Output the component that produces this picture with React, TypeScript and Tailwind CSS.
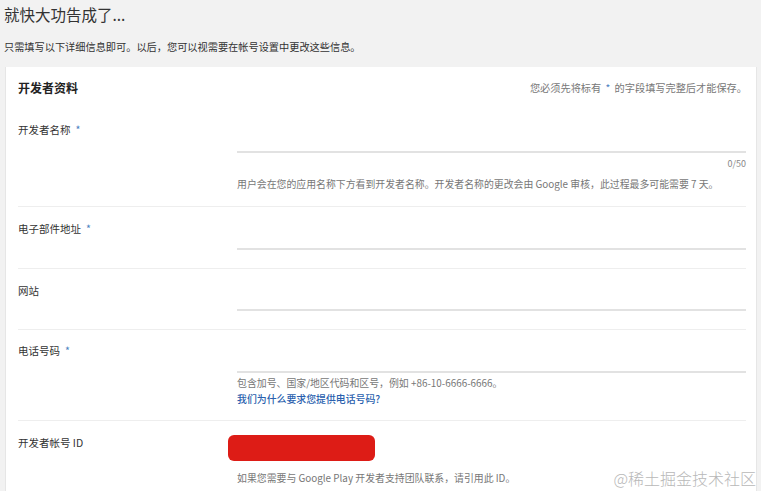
import React from "react";

const font = { fontFamily: '"Noto Sans CJK SC", "Noto Sans", sans-serif' };

function Star() {
  return <span className="ml-[5px] text-[#4a7fc1]">*</span>;
}

export default function App() {
  return (
    <div
      className="relative h-[491px] w-[761px] overflow-hidden bg-[#f2f2f2] text-[#333]"
      style={font}
    >
      <div className="pl-[4px] pt-[4px] text-[15.5px] leading-[20px] text-[#333]">就快大功告成了...</div>
      <div className="mt-[16px] pl-[4px] text-[10.2px] leading-[14px] text-[#333]">
        只需填写以下详细信息即可。以后，您可以视需要在帐号设置中更改这些信息。
      </div>

      <div className="ml-[5px] mt-[13px] w-[752px] border-l border-r border-[#e6e6e6] bg-white">
        <div className="flex h-[41px] items-center justify-between pl-[12px] pr-[9px]">
          <div className="text-[12px] font-bold leading-[14px] text-[#222]">开发者资料</div>
          <div className="text-[10.2px] leading-[12px] text-[#777]">
            您必须先将标有 <span className="px-[2px] text-[#4a7fc1]">*</span> 的字段填写完整后才能保存。
          </div>
        </div>

        <div className="ml-[12px] mr-[10px]">
          {/* Row 1 */}
          <div className="flex border-b border-[#eeeeee] pb-[15px]">
            <div className="w-[219px] shrink-0 pt-[15px] text-[10.5px] leading-[14px]">
              开发者名称<Star />
            </div>
            <div className="flex-1">
              <div className="h-[45px] border-b-[2px] border-[#e2e2e2]" />
              <div className="mt-[5px] text-right text-[9px] leading-[12px] text-[#888]">0/50</div>
              <div className="mt-[7px] text-[9.9px] leading-[14px] text-[#777]">
                用户会在您的应用名称下方看到开发者名称。开发者名称的更改会由 Google 审核，此过程最多可能需要 7 天。
              </div>
            </div>
          </div>

          {/* Row 2 */}
          <div className="flex border-b border-[#eeeeee] pb-[18px]">
            <div className="w-[219px] shrink-0 pt-[15px] text-[10.5px] leading-[14px]">
              电子部件地址<Star />
            </div>
            <div className="flex-1">
              <div className="h-[43px] border-b-[2px] border-[#e2e2e2]" />
            </div>
          </div>

          {/* Row 3 */}
          <div className="flex border-b border-[#eeeeee] pb-[18px]">
            <div className="w-[219px] shrink-0 pt-[15px] text-[10.5px] leading-[14px]">网站</div>
            <div className="flex-1">
              <div className="h-[42px] border-b-[2px] border-[#e2e2e2]" />
            </div>
          </div>

          {/* Row 4 */}
          <div className="flex border-b border-[#eeeeee] pb-[14px]">
            <div className="w-[219px] shrink-0 pt-[14px] text-[10.5px] leading-[14px]">
              电话号码<Star />
            </div>
            <div className="flex-1">
              <div className="h-[43px] border-b-[2px] border-[#e2e2e2]" />
              <div className="mt-[3px] text-[9.9px] leading-[14px] text-[#777]">
                包含加号、国家/地区代码和区号，例如 +86-10-6666-6666。
              </div>
              <div className="mt-[2px] text-[9.9px] font-medium leading-[14px] text-[#2a5fae]">
                我们为什么要求您提供电话号码?
              </div>
            </div>
          </div>

          {/* Row 5 */}
          <div className="flex pb-[20px]">
            <div className="w-[219px] shrink-0 pt-[15px] text-[10.5px] leading-[14px]">开发者帐号 ID</div>
            <div className="flex-1">
              <div className="-ml-[9px] mt-[14px] h-[26px] w-[147px] rounded-[6px] bg-[#dd1c16]" />
              <div className="mt-[10px] text-[9.9px] leading-[14px] text-[#777]">
                如果您需要与 Google Play 开发者支持团队联系，请引用此 ID。
              </div>
            </div>
          </div>
        </div>
      </div>

      <div className="absolute bottom-[3px] right-[5px] text-[16px] font-light leading-[20px] text-[#b8b8b8]">
        @稀土掘金技术社区
      </div>
    </div>
  );
}
